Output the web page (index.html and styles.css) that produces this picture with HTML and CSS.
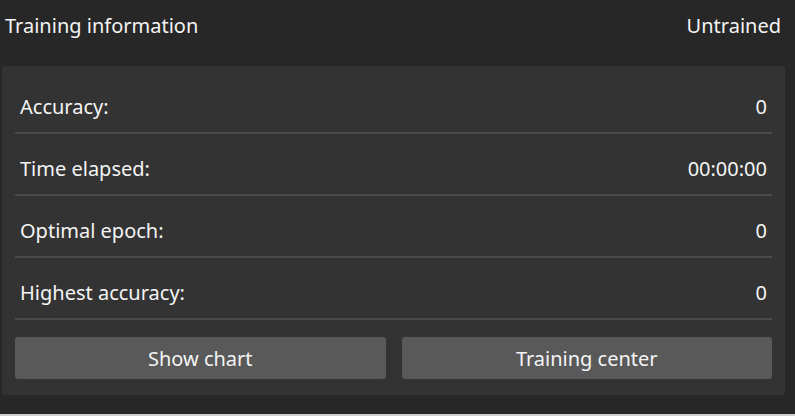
FILE: index.html
```html
<!DOCTYPE html>
<html>
<head>
<meta charset="utf-8">
<link rel="stylesheet" href="styles.css">
</head>
<body>
<div class="page">
  <div class="header">
    <span class="title">Training information</span>
    <span class="status">Untrained</span>
  </div>
  <div class="panel">
    <div class="row"><span>Accuracy:</span><span>0</span></div>
    <div class="row"><span>Time elapsed:</span><span>00:00:00</span></div>
    <div class="row"><span>Optimal epoch:</span><span>0</span></div>
    <div class="row"><span>Highest accuracy:</span><span>0</span></div>
    <div class="buttons">
      <button class="btn">Show chart</button>
      <button class="btn">Training center</button>
    </div>
  </div>
  <div class="spacer"></div>
  <div class="bottom-line"></div>
</div>
</body>
</html>
```

FILE: styles.css
```css
html, body {
  margin: 0;
  padding: 0;
  background: #272727;
}
body {
  width: 795px;
  height: 416px;
  overflow: hidden;
  font-family: "Noto Sans", "Open Sans", sans-serif;
  color: #f4f4f4;
}
.page {
  display: flex;
  flex-direction: column;
  height: 416px;
}
.header {
  height: 50px;
  display: flex;
  align-items: center;
  justify-content: space-between;
  padding: 0 14px 0 5px;
  font-size: 20px;
  margin-bottom: 16px;
}
.panel {
  margin: 0 10px 0 2px;
  background: #333333;
  border-radius: 3px;
  padding: 6px 13px 16px 13px;
}
.row {
  height: 50px;
  padding-top: 10px;
  display: flex;
  align-items: center;
  justify-content: space-between;
  padding-left: 5px;
  padding-right: 5px;
  border-bottom: 2px solid #4a4a4a;
  font-size: 20px;
  line-height: 24px;
}
.buttons {
  display: grid;
  grid-template-columns: 1fr 1fr;
  gap: 16px;
  margin-top: 17px;
}
.btn {
  height: 42px;
  background: #595959;
  border: none;
  border-radius: 3px;
  color: #f4f4f4;
  font-family: inherit;
  font-size: 20px;
  padding: 0;
}
.spacer {
  flex: 1;
}
.bottom-line {
  height: 2px;
  background: #d0d0d0;
}
```
